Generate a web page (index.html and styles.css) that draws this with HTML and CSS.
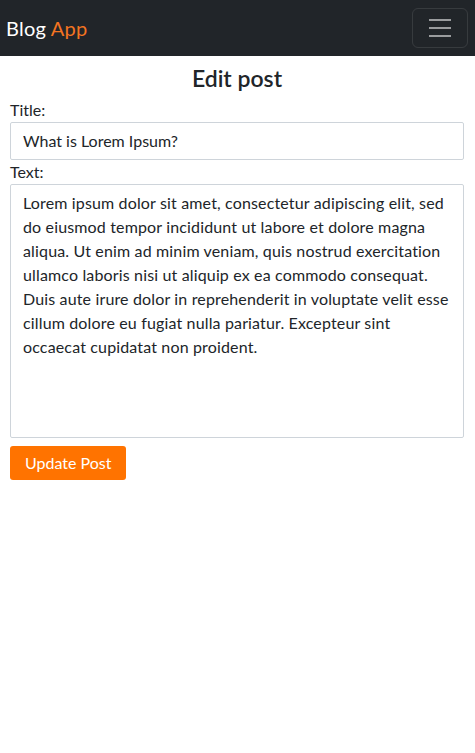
FILE: index.html
```html
<!DOCTYPE html>
<html lang="en">
<head>
<meta charset="utf-8">
<title>Blog App</title>
<link rel="stylesheet" href="styles.css">
</head>
<body>
<nav class="navbar">
  <a class="brand" href="#">Blog <span class="brand-accent">App</span></a>
  <button class="toggler" type="button" aria-label="Toggle navigation">
    <svg width="30" height="30" viewBox="0 0 30 30" aria-hidden="true">
      <path d="M4 7h22M4 15h22M4 23h22" stroke="rgba(255,255,255,0.55)" stroke-width="2" stroke-linecap="butt"/>
    </svg>
  </button>
</nav>
<main class="container">
  <h3 class="title">Edit post</h3>
  <form class="post-form">
    <label class="label" for="title">Title:</label>
    <input class="control" id="title" type="text" value="What is Lorem Ipsum?">
    <label class="label" for="text">Text:</label>
    <textarea class="control textarea" id="text">Lorem ipsum dolor sit amet, consectetur adipiscing elit, sed do eiusmod tempor incididunt ut labore et dolore magna aliqua. Ut enim ad minim veniam, quis nostrud exercitation ullamco laboris nisi ut aliquip ex ea commodo consequat. Duis aute irure dolor in reprehenderit in voluptate velit esse cillum dolore eu fugiat nulla pariatur. Excepteur sint occaecat cupidatat non proident.</textarea>
    <div class="actions">
      <button class="btn" type="submit">Update Post</button>
    </div>
  </form>
</main>
</body>
</html>
```
FILE: styles.css
```css
* { box-sizing: border-box; }
html, body { margin: 0; padding: 0; }
body {
  font-family: Lato, "Noto Sans", sans-serif;
  font-size: 16px;
  line-height: 1.5;
  color: #212529;
  background: #fff;
}
.navbar {
  height: 56px;
  background: #212529;
  display: flex;
  align-items: center;
  justify-content: space-between;
  padding: 0 7px 0 6px;
}
.brand {
  color: #fff;
  text-decoration: none;
  font-size: 20px;
  line-height: 30px;
  letter-spacing: 0.25px;
}
.brand-accent { color: #f47421; }
.toggler {
  width: 56px;
  height: 40px;
  background: transparent;
  border: 1px solid rgba(255,255,255,0.1);
  border-radius: 6px;
  display: flex;
  align-items: center;
  justify-content: center;
  padding: 0;
}
.container { padding: 0 11px 0 10px; }
.title {
  margin: 8px 0 6px;
  text-align: center;
  font-size: 23px;
  font-weight: 600;
  line-height: 28px;
}
.post-form { display: flex; flex-direction: column; }
.label { line-height: 24px; }
.control {
  font: inherit;
  color: #212529;
  border: 1px solid #ced4da;
  border-radius: 2px;
  padding: 6px 12px;
  line-height: 24px;
  width: 100%;
  background: #fff;
}
.textarea {
  height: 254px;
  resize: none;
  display: block;
  letter-spacing: 0.15px;
}
.actions { padding-top: 8px; }
.btn {
  font: inherit;
  color: #fff;
  background: #ff7300;
  border: none;
  border-radius: 3px;
  padding: 5px 15px;
  line-height: 24px;
}
```
